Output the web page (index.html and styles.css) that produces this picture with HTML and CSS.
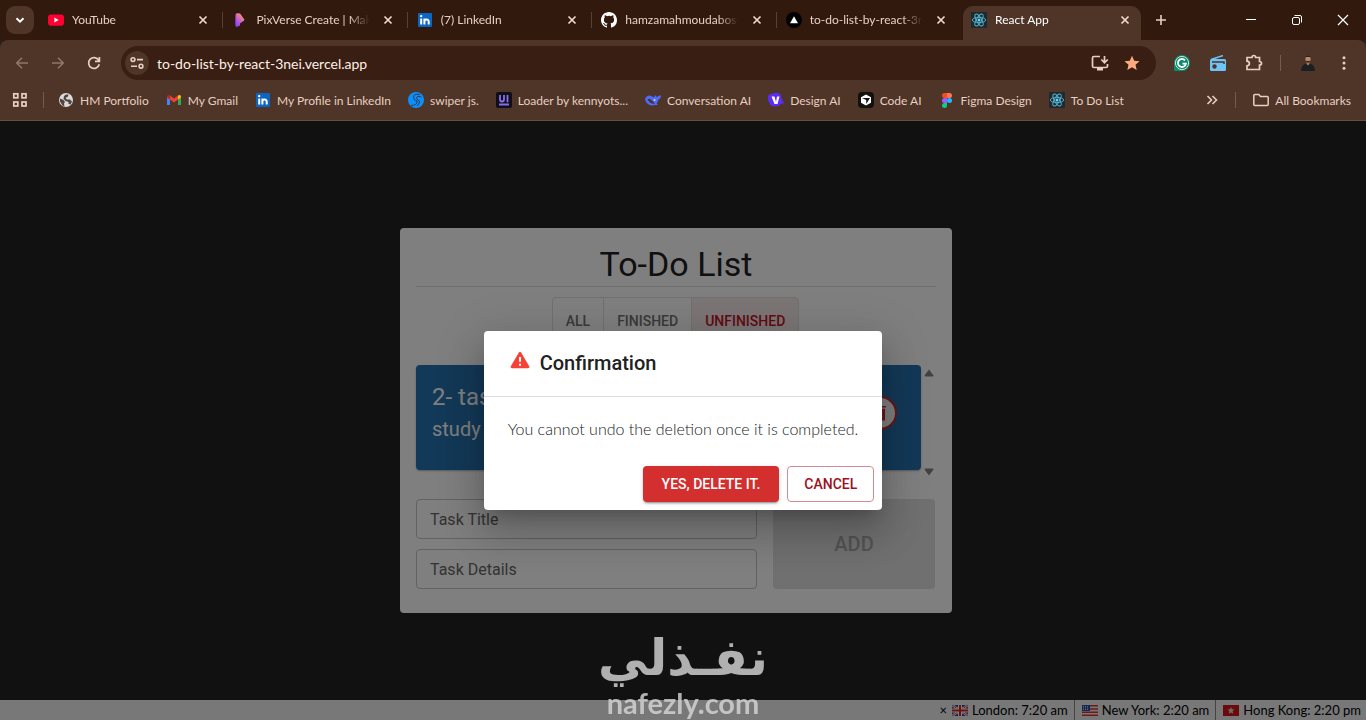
FILE: index.html
```html
<!DOCTYPE html>
<html lang="en">
<head>
    <meta charset="UTF-8">
    <meta name="viewport" content="width=device-width, initial-scale=1.0">
    <title>React App</title>
    <link rel="stylesheet" href="styles.css">
</head>
<body>
    <!-- Shared icons -->
    <svg class="sprite" aria-hidden="true">
        <symbol id="close" viewBox="0 0 16 16"><path d="M4.5 4.5l7 7M11.5 4.5l-7 7" fill="none" stroke="currentColor" stroke-width="1.7"/></symbol>
        <symbol id="linkedin" viewBox="0 0 16 16">
            <rect x="1" y="1" width="14" height="14" rx="1" fill="#0a66c2"/>
            <path d="M4.2 6.6v6M7.4 12.6v-6M7.4 9.6c0-2.6 4.3-3 4.3 0v3" fill="none" stroke="#fff" stroke-width="2"/>
            <circle cx="4.2" cy="4.1" r="1.2" fill="#fff"/>
        </symbol>
        <symbol id="react" viewBox="0 0 16 16">
            <rect width="16" height="16" fill="#20292f"/>
            <g fill="none" stroke="#53b7d0" stroke-width="0.9">
                <ellipse cx="8" cy="8" rx="6.7" ry="2.6"/>
                <ellipse cx="8" cy="8" rx="6.7" ry="2.6" transform="rotate(60 8 8)"/>
                <ellipse cx="8" cy="8" rx="6.7" ry="2.6" transform="rotate(120 8 8)"/>
            </g>
            <circle cx="8" cy="8" r="1.5" fill="#61dafb"/>
        </symbol>
    </svg>

    <!-- Tab strip -->
    <header class="tab-strip">
        <button class="tab-search" aria-label="Search tabs"><svg class="icon" viewBox="0 0 16 16"><path d="M4.5 6.2L8 9.7l3.5-3.5" fill="none" stroke="currentColor" stroke-width="2"/></svg></button>
        <nav class="tabs">
            <div class="tab">
                <svg class="icon" viewBox="0 0 16 16"><rect y="2.4" width="16" height="11.4" rx="3" fill="#f03"/><path d="M6.4 5.6v5l4.2-2.5z" fill="#fff"/></svg>
                <a href="#" class="tab-title">YouTube</a>
                <button class="tab-close" aria-label="Close YouTube"><svg class="icon"><use href="#close"/></svg></button>
            </div>
            <div class="tab">
                <svg class="icon" viewBox="0 0 16 16"><defs><linearGradient id="pix" x1="0" y1="1" x2="0.7" y2="0"><stop offset="0" stop-color="#7a3cff"/><stop offset="0.5" stop-color="#c25cd8"/><stop offset="1" stop-color="#ff9d5c"/></linearGradient></defs><path d="M3.5 3.5Q3.5 1 5.5 1.2L8 1.6 12.200 7.200Q12.800 8 11.800 8.800L8 11.500V13.500L4.500 15Q3.200 14.800 3.300 12z" fill="url(#pix)"/></svg>
                <a href="#" class="tab-title">PixVerse Create | Make AI</a>
                <button class="tab-close" aria-label="Close PixVerse"><svg class="icon"><use href="#close"/></svg></button>
            </div>
            <div class="tab">
                <svg class="icon"><use href="#linkedin"/></svg>
                <a href="#" class="tab-title">(7) LinkedIn</a>
                <button class="tab-close" aria-label="Close LinkedIn"><svg class="icon"><use href="#close"/></svg></button>
            </div>
            <div class="tab">
                <svg class="icon" viewBox="0 0 16 16"><path fill="#fff" d="M8 0C3.58 0 0 3.58 0 8c0 3.54 2.29 6.53 5.47 7.59.4.07.55-.17.55-.38 0-.19-.01-.82-.01-1.49-2.01.37-2.53-.49-2.69-.94-.09-.23-.48-.94-.82-1.13-.28-.15-.68-.52-.01-.53.63-.01 1.08.58 1.23.82.72 1.21 1.87.87 2.33.66.07-.52.28-.87.51-1.07-1.78-.2-3.64-.89-3.64-3.95 0-.87.31-1.59.82-2.15-.08-.2-.36-1.02.08-2.12 0 0 .67-.21 2.2.82a7.6 7.6 0 014 0c1.53-1.04 2.2-.82 2.2-.82.44 1.1.16 1.92.08 2.12.51.56.82 1.27.82 2.15 0 3.07-1.87 3.75-3.65 3.95.29.25.54.73.54 1.48 0 1.07-.01 1.93-.01 2.2 0 .21.15.46.55.38A8.01 8.01 0 0016 8c0-4.42-3.58-8-8-8z"/></svg>
                <a href="#" class="tab-title">hamzamahmoudabostait</a>
                <button class="tab-close" aria-label="Close GitHub"><svg class="icon"><use href="#close"/></svg></button>
            </div>
            <div class="tab">
                <svg class="icon" viewBox="0 0 16 16"><circle cx="8" cy="8" r="8" fill="#000"/><path d="M8 4.2l4 7H4z" fill="#fff"/></svg>
                <a href="#" class="tab-title">to-do-list-by-react-3nei</a>
                <button class="tab-close" aria-label="Close Vercel"><svg class="icon"><use href="#close"/></svg></button>
            </div>
            <div class="tab active">
                <svg class="icon"><use href="#react"/></svg>
                <a href="#" class="tab-title">React App</a>
                <button class="tab-close" aria-label="Close React App"><svg class="icon"><use href="#close"/></svg></button>
            </div>
        </nav>
        <button class="new-tab" aria-label="New tab"><svg class="icon" viewBox="0 0 16 16"><path d="M8 3v10M3 8h10" stroke="currentColor" stroke-width="1.6"/></svg></button>
        <div class="window-controls">
            <button aria-label="Minimize"><svg class="icon" viewBox="0 0 16 16"><path d="M3 7.5h10" stroke="currentColor"/></svg></button>
            <button aria-label="Restore"><svg class="icon" viewBox="0 0 16 16"><g fill="none" stroke="currentColor"><rect x="3.5" y="5.5" width="7" height="7" rx="1.5"/><path d="M5.5 3.5h5.5q1.5 0 1.5 1.5v5.5"/></g></svg></button>
            <button aria-label="Close window"><svg class="icon" viewBox="0 0 16 16"><path d="M3 3l10 10M13 3L3 13" stroke="currentColor" stroke-width="1.2"/></svg></button>
        </div>
    </header>

    <!-- Toolbar -->
    <div class="toolbar">
        <button class="tool dim" aria-label="Back"><svg class="icon" viewBox="0 0 16 16"><path d="M14 8H3M8 2.7L2.7 8 8 13.3" fill="none" stroke="currentColor" stroke-width="1.5"/></svg></button>
        <button class="tool dim" aria-label="Forward"><svg class="icon" viewBox="0 0 16 16"><path d="M2 8h11M8 2.7L13.3 8 8 13.3" fill="none" stroke="currentColor" stroke-width="1.5"/></svg></button>
        <button class="tool" aria-label="Reload"><svg class="icon" viewBox="0 0 16 16"><path d="M12.7 5.2A5.4 5.4 0 1 0 13.3 9.3M13.4 2v4.4H9" fill="none" stroke="currentColor" stroke-width="1.7"/></svg></button>
        <div class="omnibox">
            <button class="site-info" aria-label="Site information"><svg class="icon" viewBox="0 0 16 16"><g fill="none" stroke="currentColor" stroke-width="1.6"><circle cx="4" cy="4.6" r="1.9"/><path d="M8 4.6h6M2 11.2h6"/><circle cx="12" cy="11.2" r="1.9"/></g></svg></button>
            <input type="text" aria-label="Address" value="to-do-list-by-react-3nei.vercel.app">
            <button class="omni-action" aria-label="Install app"><svg class="icon large" viewBox="0 0 20 20"><path d="M10 3.5H4Q2.500 3.500 2.500 5v8q0 1.500 1.500 1.500h12q1.500 0 1.500-1.500v-2" fill="none" stroke="currentColor" stroke-width="1.700"/><path d="M7 15h6v2.500H7z" fill="currentColor"/><path d="M14.500 3v6.500M11.300 6.500l3.200 3.200 3.200-3.200" fill="none" stroke="currentColor" stroke-width="1.700"/></svg></button>
            <button class="omni-action" aria-label="Bookmark this tab"><svg class="icon" viewBox="0 0 16 16"><path d="M8 .8l2.200 4.900 5.300.5-4 3.600 1.200 5.300L8 12.300l-4.700 2.800 1.200-5.300-4-3.600 5.300-.5z" fill="#ffa97e"/></svg></button>
        </div>
        <button class="tool" aria-label="Grammarly"><svg class="icon" viewBox="0 0 16 16"><path d="M8 0a8 8 0 1 1 0 16H1q-1 0-1-1V8a8 8 0 0 1 8-8z" fill="#0d8a6c"/><circle cx="8" cy="8" r="6.600" fill="none" stroke="#d8efe8" stroke-width=".9"/><path d="M11 5.400A4 4 0 1 0 11.900 8.600H8.500" fill="none" stroke="#fff" stroke-width="1.800"/></svg></button>
        <button class="tool" aria-label="Radio"><svg class="icon" viewBox="0 0 16 16"><path d="M1 4.500L13 .5" stroke="#6cc5f5" stroke-width="1.400"/><rect y="4" width="16" height="12" rx="1.500" fill="#6cc5f5"/><circle cx="4.500" cy="11.500" r="2.200" fill="#4e3527"/><path d="M2 7h12v2" fill="none" stroke="#4e3527" stroke-width="1.500"/></svg></button>
        <button class="tool" aria-label="Extensions"><svg class="icon large" viewBox="0 0 20 20"><path d="M3 4.500H8Q8 2.500 9.800 2.500T11.600 4.500H15.500V8.500Q17.500 8.500 17.500 10.300T15.500 12.100V16.500H3V12.800Q5.400 12.600 5.400 10.500T3 8.200z" fill="none" stroke="currentColor" stroke-width="1.700"/></svg></button>
        <span class="separator"></span>
        <button class="tool" aria-label="Profile"><svg class="icon" viewBox="0 0 16 16"><path d="M1 16Q1.500 9.500 6 8.500h4q4.500 1 5 7.500z" fill="#1b1f22"/><path d="M6.500 6h3v3L8 10.500 6.500 9z" fill="#a87860"/><ellipse cx="8" cy="4" rx="2.600" ry="3.400" fill="#b98a70"/><path d="M5.400 3Q5.500.3 8 .3T10.600 3L9.800 2H6.200zM6 5.500q2 1 4 0L9.500 7.400h-3z" fill="#2b201c"/></svg></button>
        <button class="tool" aria-label="Menu"><svg class="icon" viewBox="0 0 16 16"><g fill="currentColor"><circle cx="8" cy="2.800" r="1.500"/><circle cx="8" cy="8" r="1.500"/><circle cx="8" cy="13.200" r="1.500"/></g></svg></button>
    </div>

    <!-- Bookmarks -->
    <nav class="bookmarks">
        <button class="apps" aria-label="Apps"><svg class="icon" viewBox="0 0 16 16"><g fill="none" stroke="currentColor" stroke-width="1.700"><rect x="1.800" y="1.800" width="4" height="4"/><rect x="10" y="1.800" width="4" height="4"/><rect x="1.800" y="10" width="4" height="4"/><rect x="10" y="10" width="4" height="4"/></g></svg></button>
        <span class="separator"></span>
        <div class="bookmark-list">
            <a href="#"><svg class="icon" viewBox="0 0 16 16"><circle cx="8" cy="8" r="7" fill="#dadada"/><path d="M2 6.500l3.500 1.500L7 10l-1 1.500.5 3-2-1-2.500-4zM8 2.500l2.500 0-.5 2-2.500 1.500 1.500 1.500h3L14 9.500l-1.500 3-2-.5v-2L7.500 9 5.500 7 6 4z" fill="#51453f"/></svg>HM Portfolio</a>
            <a href="#"><svg class="icon" viewBox="0 0 16 16"><path d="M1 4v8.500q0 .5.700.5H4V6z" fill="#4285f4"/><path d="M12 6v7h2.300q.7 0 .7-.5V4z" fill="#34a853"/><path d="M4 3.500l4 3 4-3v4l-4 3-4-3z" fill="#ea4335"/><path d="M1 4.500Q1.200 2 4 3.500v4L1 5.500z" fill="#c5221f"/><path d="M15 4.500Q14.800 2 12 3.500v4l3-2z" fill="#fbbc04"/></svg>My Gmail</a>
            <a href="#"><svg class="icon"><use href="#linkedin"/></svg>My Profile in LinkedIn</a>
            <a href="#"><svg class="icon" viewBox="0 0 16 16"><circle cx="8" cy="8" r="8" fill="#0a8fff"/><path d="M12 2.500Q5.500 1.500 5.500 5T9 9Q9.500 13.500 3 13.500M13.500 5Q9 3.500 8.500 5.500T11.500 9Q11.500 12 9 14" fill="none" stroke="#3a3a48" stroke-width="1"/></svg>swiper js.</a>
            <a href="#"><svg class="icon" viewBox="0 0 16 16"><rect width="16" height="16" rx="2" fill="#100f17"/><path d="M4 3v4.500q0 2 2 2t2-2V3M11.500 3v7.300M3 12.500h10" fill="none" stroke="#8a6cf0" stroke-width="1.800"/></svg>Loader by kennyots...</a>
            <a href="#"><svg class="icon" viewBox="0 0 16 16"><path d="M0 7Q1 3.500 5 3.500L9 5.500 10 3l1.500 2L16 3q0 4-3 5 0 2-1.500 3.500L13 13H10Q2 15 0 7z" fill="#4d6bfe"/><path d="M2.500 7.500Q4 5.800 6.500 8L10 11.500Q5 12.500 2.500 7.500z" fill="#4e3527"/><circle cx="9.500" cy="8" r="1" fill="#c8d2ff"/></svg>Conversation AI</a>
            <a href="#"><svg class="icon" viewBox="0 0 16 16"><path d="M7 1Q13 0 13.500 6l2.500 5-3 1Q10 15 6 14.500T0 8 7 1z" fill="#5a2df5"/><path d="M3.500 4.500h3l1.500 5.500 1-5.500h2.500L9.500 12h-3z" fill="#fff"/></svg>Design AI</a>
            <a href="#"><svg class="icon" viewBox="0 0 16 16"><rect width="16" height="16" rx="4" fill="#11110d"/><path d="M8 2.500l5 2.800v5.400l-5 2.800-5-2.800V5.300z" fill="#fff"/><path d="M4 6h8l-3.800 6V8z" fill="#11110d"/></svg>Code AI</a>
            <a href="#"><svg class="icon" viewBox="0 0 16 16"><path d="M8 1H5.500a2.500 2.500 0 0 0 0 5H8z" fill="#f24e1e"/><path d="M8 1h2.500a2.500 2.500 0 0 1 0 5H8z" fill="#ff7262"/><path d="M8 6H5.500a2.500 2.500 0 0 0 0 5H8z" fill="#a259ff"/><circle cx="10.500" cy="8.500" r="2.500" fill="#1abcfe"/><path d="M8 11H5.500a2.500 2.500 0 1 0 2.500 2.500z" fill="#0acf83"/></svg>Figma Design</a>
            <a href="#"><svg class="icon"><use href="#react"/></svg>To Do List</a>
        </div>
        <button class="more" aria-label="More bookmarks"><svg class="icon" viewBox="0 0 16 16"><path d="M3.500 4l4 4-4 4M8.500 4l4 4-4 4" fill="none" stroke="currentColor" stroke-width="1.600"/></svg></button>
        <span class="separator"></span>
        <a href="#" class="all-bookmarks"><svg class="icon" viewBox="0 0 16 16"><path d="M.8 12.500v-9q0-1 1-1h4l1.700 2h6.700q1 0 1 1v7q0 1-1 1H1.800q-1 0-1-1z" fill="none" stroke="currentColor" stroke-width="1.500"/></svg>All Bookmarks</a>
    </nav>

    <!-- Page -->
    <main class="viewport">
        <div class="card">
            <h1>To-Do List</h1>
            <div class="filters">
                <button>ALL</button>
                <button>FINISHED</button>
                <button class="selected">UNFINISHED</button>
            </div>
            <div class="task-list">
                <div class="task">
                    <div>
                        <h2>2- task</h2>
                        <p>study</p>
                    </div>
                    <button class="delete" aria-label="Delete task"><svg class="icon large" viewBox="0 0 24 24"><path d="M5 3.500h4.500l1-1h3l1 1H19v2H5zM6 7h12v14H6z" fill="#d32f2f"/><path d="M9.500 11.500l5 5M14.500 11.500l-5 5" stroke="#fff" stroke-width="1.500"/></svg></button>
                </div>
                <div class="scrollbar">
                    <svg class="arrow" viewBox="0 0 10 8"><path d="M5 .5l4.500 6q0 1-1 1h-7q-1 0-1-1z" fill="#858585"/></svg>
                    <svg class="arrow" viewBox="0 0 10 8"><path d="M5 7.500l4.500-6q0-1-1-1h-7q-1 0-1 1z" fill="#858585"/></svg>
                </div>
            </div>
            <form class="new-task">
                <div class="fields">
                    <input type="text" aria-label="Task Title" placeholder="Task Title">
                    <input type="text" aria-label="Task Details" placeholder="Task Details">
                </div>
                <button type="button" class="add" disabled>ADD</button>
            </form>
        </div>

        <footer class="clock-bar">
            <button class="clock-close" aria-label="Hide clocks">×</button>
            <span class="clock"><svg class="flag" viewBox="0 0 16 11"><rect width="16" height="11" fill="#23408f"/><path d="M0 0l16 11M16 0L0 11" stroke="#fff" stroke-width="2.400"/><path d="M0 0l16 11M16 0L0 11" stroke="#d22" stroke-width=".9"/><path d="M8 0v11M0 5.500h16" stroke="#fff" stroke-width="4"/><path d="M8 0v11M0 5.500h16" stroke="#d22" stroke-width="2"/></svg>London: 7:20 am</span>
            <span class="clock"><svg class="flag" viewBox="0 0 16 11"><rect width="16" height="11" fill="#eee"/><path d="M0 .8h16M0 4h16M0 7.200h16M0 10.300h16" stroke="#d33" stroke-width="1.500"/><rect width="8" height="6" fill="#2a4fa8"/><path d="M1 1.500h6M1 3h6M1 4.500h6" stroke="#fff" stroke-width=".7" stroke-dasharray="1 1"/></svg>New York: 2:20 am</span>
            <span class="clock"><svg class="flag" viewBox="0 0 16 11"><rect width="16" height="11" fill="#d4151b"/><path d="M8 2l1 2.300 2.600.2-2 1.600.7 2.600L8 7.400 5.700 8.700l.7-2.600-2-1.600L7 4.300z" fill="#f3d0c8"/></svg>Hong Kong: 2:20 pm</span>
        </footer>

        <!-- Confirmation dialog -->
        <div class="backdrop">
            <div class="dialog" role="dialog" aria-labelledby="dialog-title">
                <h2 id="dialog-title"><svg class="warning" viewBox="0 0 24 24"><path d="M10.800 2.800q1.200-1.600 2.400 0l10 17q.5 2.200-1.600 2.200H2.400Q.3 22 .8 19.800z" fill="#f44336"/><path d="M12 8.500v5.500M12 16.500v2.500" stroke="#fff" stroke-width="2.400"/></svg>Confirmation</h2>
                <p>You cannot undo the deletion once it is completed.</p>
                <div class="dialog-actions">
                    <button class="confirm">YES, DELETE IT.</button>
                    <button class="cancel">CANCEL</button>
                </div>
            </div>
        </div>
    </main>

    <div class="watermark">
        <span class="brand-ar" lang="ar" dir="rtl">نفـذلي</span>
        <span class="brand-en">nafezly.com</span>
    </div>
</body>
</html>
```

FILE: styles.css
```css
/* General Styles */
* {
    box-sizing: border-box;
}
body {
    margin: 0;
    min-height: 100vh;
    display: flex;
    flex-direction: column;
    position: relative;
    background-color: #222;
    color: #e8cfc2;
    font-family: Lato, "Open Sans", sans-serif;
    font-size: 12px;
}
button {
    display: flex;
    align-items: center;
    justify-content: center;
    padding: 0;
    border: none;
    background: none;
    color: inherit;
    font: inherit;
    cursor: pointer;
}
a {
    color: inherit;
    text-decoration: none;
}
h1, h2, p {
    margin: 0;
}
.sprite {
    position: absolute;
    width: 0;
    height: 0;
}
.icon {
    width: 16px;
    height: 16px;
    flex: none;
}
.large {
    width: 20px;
    height: 20px;
}
.separator {
    width: 1px;
    height: 16px;
    background-color: #775a4b;
}
/* Tab strip */
.tab-strip {
    display: flex;
    align-items: center;
    height: 40px;
    padding-left: 6px;
    background-color: #32190d;
}
.tab-search {
    width: 28px;
    height: 28px;
    margin-right: 4px;
    border-radius: 9px;
    background-color: #4e3527;
    color: #fff;
}
.tabs {
    display: flex;
    flex: 1;
    align-self: stretch;
    min-width: 0;
}
.tab {
    flex: 1;
    min-width: 0;
    display: flex;
    align-items: center;
    gap: 8px;
    padding: 0 11px 0 10px;
    position: relative;
}
.tab + .tab::before {
    content: "";
    position: absolute;
    left: 0;
    width: 1px;
    height: 16px;
    background-color: #5a4033;
}
.tab-title {
    flex: 1;
    overflow: hidden;
    white-space: nowrap;
    line-height: 16px;
    -webkit-mask-image: linear-gradient(to right, #000 80%, transparent 98%);
    mask-image: linear-gradient(to right, #000 80%, transparent 98%);
}
.tab-close {
    color: #f0d8cc;
}
.tab.active {
    flex: 0 0 178px;
    margin: 6px 4px 0 3px;
    padding: 0 8px 6px;
    border-radius: 10px 10px 0 0;
    background-color: #4e3527;
    color: #fff;
}
.tab.active::before {
    display: none;
}
.new-tab {
    width: 32px;
    margin-right: 51px;
}
.window-controls {
    display: flex;
    color: #fff;
}
.window-controls button {
    width: 46px;
    height: 40px;
}
/* Toolbar */
.toolbar {
    display: flex;
    align-items: center;
    height: 46px;
    padding: 0 4px;
    background-color: #4e3527;
    border-radius: 8px 8px 0 0;
    box-shadow: 0 -8px 0 -2px #32190d;
}
.tool {
    width: 36px;
    height: 34px;
}
.dim {
    color: #93776a;
}
.omnibox {
    flex: 1;
    display: flex;
    align-items: center;
    height: 34px;
    margin: 0 8px 0 9px;
    padding: 0 8px 0 4px;
    border-radius: 17px;
    background-color: #381e13;
}
.omnibox input {
    flex: 1;
    min-width: 0;
    padding: 0 8px;
    border: none;
    outline: none;
    background: none;
    color: #fff0e8;
    font: inherit;
    font-size: 14px;
}
.site-info {
    width: 24px;
    height: 24px;
    border-radius: 50%;
    background-color: #4e3527;
}
.omni-action {
    width: 32px;
    height: 32px;
}
.toolbar .separator {
    margin: 0 9px 0 8px;
}
/* Bookmarks */
.bookmarks {
    display: flex;
    align-items: center;
    height: 35px;
    padding: 0 15px 6px 12px;
    border-bottom: 1px solid #66503f;
    background-color: #4e3527;
}
.bookmarks a {
    display: flex;
    align-items: center;
    gap: 6px;
    white-space: nowrap;
}
.apps {
    margin-right: 15px;
}
.bookmark-list {
    flex: 1;
    display: flex;
    gap: 17px;
    margin-left: 14px;
}
.more {
    margin-right: 15px;
}
.all-bookmarks {
    margin-left: 17px;
}
/* Page */
.viewport {
    flex: 1;
    display: flex;
    align-items: center;
    justify-content: center;
    position: relative;
    padding-right: 14px;
    font-family: Roboto, sans-serif;
}
.card {
    width: 552px;
    max-width: 90%;
    padding: 16px 16px 24px;
    border-radius: 4px;
    background-color: #fff;
    color: #212121;
}
.card h1 {
    padding-bottom: 1px;
    border-bottom: 1px solid #ddd;
    font-size: 34px;
    font-weight: 400;
    line-height: 41px;
    text-align: center;
}
.filters {
    display: flex;
    justify-content: center;
    margin-top: 10px;
    font-size: 14px;
    font-weight: 500;
    color: #757575;
}
.filters button {
    height: 48px;
    padding: 0 13px;
    border: 1px solid #e0e0e0;
    margin-left: -1px;
}
.filters button:first-child {
    border-radius: 4px 0 0 4px;
}
.filters button:last-child {
    border-radius: 0 4px 4px 0;
}
.filters .selected {
    background-color: #f7ebeb;
    color: #c4162a;
}
.task-list {
    display: flex;
    margin-top: 20px;
}
.task {
    flex: 1;
    display: flex;
    align-items: flex-start;
    justify-content: space-between;
    height: 105px;
    padding: 16px;
    border-radius: 4px;
    background-color: #2672b0;
    color: #fff;
    box-shadow: 0 1px 2px rgba(0, 0, 0, 0.3);
}
.task h2 {
    font-size: 24px;
    font-weight: 400;
    line-height: 32px;
}
.task p {
    font-size: 20px;
    line-height: 32px;
}
.task .delete {
    width: 34px;
    height: 34px;
    margin: 15px 8px 0 0;
    border: 2px solid #d32f2f;
    border-radius: 50%;
    background-color: #fff;
}
.scrollbar {
    display: flex;
    flex-direction: column;
    align-items: center;
    justify-content: space-between;
    width: 15px;
    padding-top: 4px;
    margin-bottom: -6px;
}
.arrow {
    width: 10px;
    height: 8px;
}
.new-task {
    display: flex;
    gap: 16px;
    margin-top: 29px;
}
.fields {
    flex: 1;
    display: flex;
    flex-direction: column;
    gap: 10px;
}
.fields input {
    width: 100%;
    height: 40px;
    padding: 0 13px;
    border: 1px solid #c4c4c4;
    border-radius: 4px;
    background: none;
    font: inherit;
    font-size: 16px;
}
.fields input::placeholder {
    color: #666;
}
.add {
    width: 162px;
    margin-right: 1px;
    border-radius: 4px;
    background-color: #e0e0e0;
    color: #a6a6a6;
    font-size: 20px;
    font-weight: 500;
}
/* Clock bar */
.clock-bar {
    position: absolute;
    left: 0;
    right: 0;
    bottom: 0;
    display: flex;
    justify-content: flex-end;
    height: 20px;
    padding-right: 5px;
    background-color: #f0f0f0;
    color: #000;
    font-family: Lato, sans-serif;
    font-size: 13px;
    line-height: 20px;
}
.clock {
    display: flex;
    align-items: center;
    gap: 4px;
    white-space: nowrap;
}
.clock + .clock {
    margin-left: 6px;
    padding-left: 7px;
    border-left: 1px solid #888;
}
.clock-close {
    margin-right: 5px;
}
.flag {
    width: 16px;
    height: 11px;
}
/* Dialog */
.backdrop {
    position: absolute;
    inset: 0;
    display: flex;
    align-items: center;
    justify-content: center;
    background-color: rgba(0, 0, 0, 0.5);
}
.dialog {
    border-radius: 4px;
    background-color: #fff;
    color: #212121;
    box-shadow: 0 11px 15px -7px rgba(0, 0, 0, 0.2), 0 24px 38px 3px rgba(0, 0, 0, 0.14), 0 9px 46px 8px rgba(0, 0, 0, 0.12);
}
.dialog h2 {
    display: flex;
    gap: 8px;
    padding: 16px 24px;
    border-bottom: 1px solid #ddd;
    font-size: 20px;
    font-weight: 500;
    line-height: 33px;
}
.warning {
    width: 20px;
    height: 20px;
    margin: 3px 2px;
}
.dialog p {
    padding: 20px 24px;
    font-family: Lato, sans-serif;
    font-size: 16px;
    font-weight: 300;
    line-height: 24px;
}
.dialog-actions {
    display: flex;
    justify-content: flex-end;
    gap: 8px;
    padding: 5px 8px 8px;
    font-size: 14px;
    font-weight: 500;
}
.dialog-actions button {
    height: 36px;
    padding: 0 16px;
    border-radius: 4px;
}
.dialog-actions .confirm {
    padding: 0 19px;
    background-color: #d32f2f;
    color: #fff;
    box-shadow: 0 3px 1px -2px rgba(0, 0, 0, 0.2), 0 2px 2px rgba(0, 0, 0, 0.14), 0 1px 5px rgba(0, 0, 0, 0.12);
}
.dialog-actions .cancel {
    border: 1px solid #d58a94;
    color: #a0101c;
}
/* Watermark */
.watermark {
    position: absolute;
    left: 0;
    right: 0;
    bottom: 0;
    display: flex;
    flex-direction: column;
    align-items: center;
    padding-bottom: 2px;
    color: #d8d8d8;
    opacity: 0.8;
    pointer-events: none;
}
.brand-ar {
    font-family: "DejaVu Sans", sans-serif;
    font-size: 50px;
    font-weight: 700;
    line-height: 60px;
}
.brand-en {
    font-family: Lato, sans-serif;
    font-size: 29px;
    font-weight: 700;
    line-height: 30px;
}
```
